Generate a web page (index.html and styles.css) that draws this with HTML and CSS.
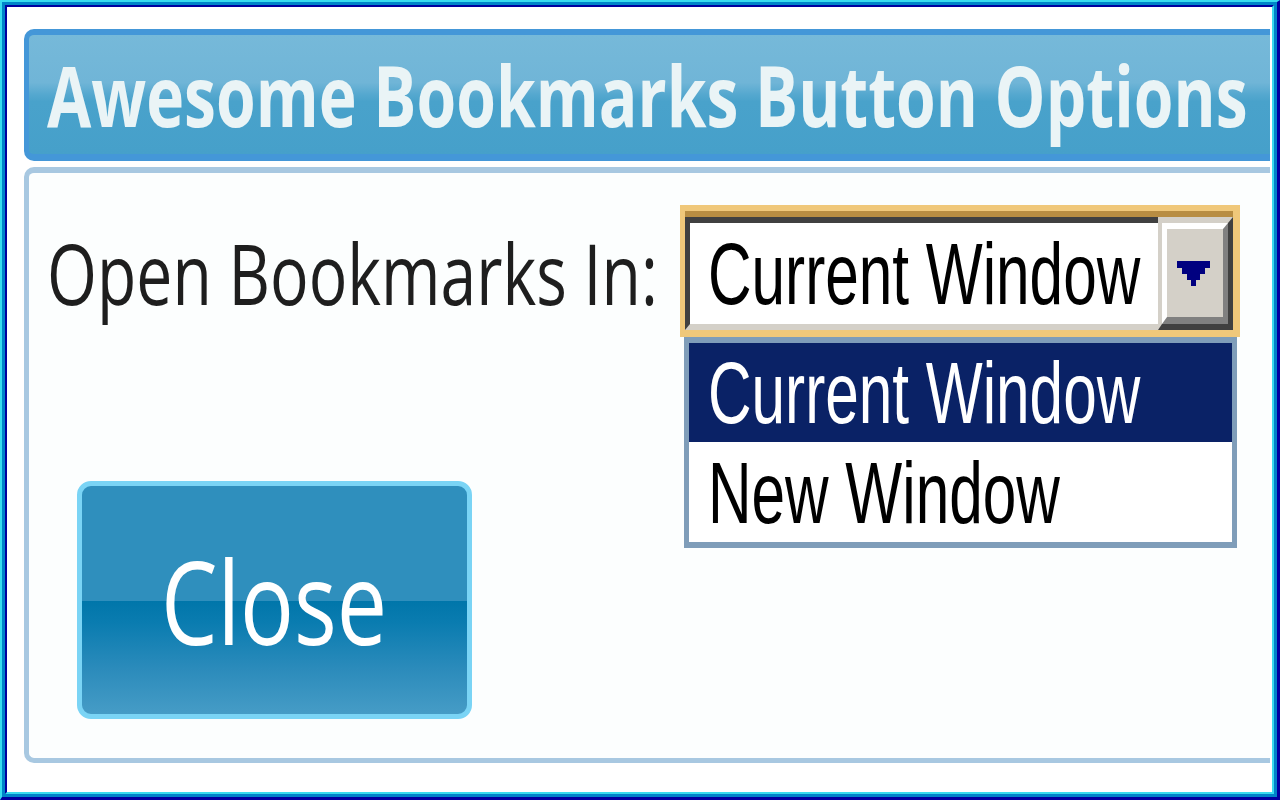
FILE: index.html
```html
<!DOCTYPE html>
<html lang="en">
<head>
<meta charset="utf-8">
<title>Awesome Bookmarks Button Options</title>
<link rel="stylesheet" href="styles.css">
</head>
<body>
<div class="frame">
  <div class="frame-mid">
    <div class="frame-in">
      <div class="titlebar"><span class="title-text">Awesome Bookmarks Button Options</span></div>
      <div class="panel">
        <div class="row">
          <div class="label"><span class="label-text">Open Bookmarks In:</span></div>
          <div class="select-wrap">
            <div class="select-ring">
              <div class="field">
                <div class="textbox"><span class="sel-text">Current Window</span></div>
                <div class="dropbtn">
                  <div class="dropbtn-face">
                    <svg class="arrow" width="33" height="25" viewBox="0 0 33 25" shape-rendering="crispEdges">
                      <polygon points="0,0 33,0 33,7 28,7 28,13 23,13 23,19 19,19 19,25 14,25 14,19 10,19 10,13 5,13 5,7 0,7" fill="#000080"/>
                    </svg>
                  </div>
                </div>
              </div>
            </div>
            <ul class="options">
              <li class="option selected"><span class="sel-text">Current Window</span></li>
              <li class="option"><span class="sel-text">New Window</span></li>
            </ul>
          </div>
        </div>
        <div class="actions">
          <button class="close-btn" type="button"><span class="close-text">Close</span></button>
        </div>
      </div>
    </div>
  </div>
</div>
</body>
</html>
```
FILE: styles.css
```css
html, body {
  margin: 0;
  padding: 0;
  background: #ffffff;
}

.frame {
  width: 1280px;
  height: 800px;
  box-sizing: border-box;
  border-style: solid;
  border-width: 2px 3px 3px 2px;
  border-color: #38dcef #0000a0 #0000a0 #38dcef;
  overflow: hidden;
  font-family: "Open Sans", "Noto Sans", sans-serif;
}

.frame-mid {
  height: 100%;
  box-sizing: border-box;
  border: 3px solid #0084c9;
}

.frame-in {
  height: 100%;
  box-sizing: border-box;
  border-style: solid;
  border-width: 2px;
  border-color: #0000a0 #38dcef #38dcef #0000a0;
  background: #ffffff;
  padding: 22px 2px 0 17px;
}

/* Title bar */
.titlebar {
  height: 132px;
  box-sizing: border-box;
  border-style: solid;
  border-color: #4497d8;
  border-width: 6px 0 7px 5px;
  border-radius: 10px 0 0 10px;
  background: linear-gradient(to bottom, #76b9d9 0%, #70b5d7 40%, #55a8cf 50%, #49a2cb 56%, #46a0ca 100%);
  display: flex;
  align-items: center;
  padding-left: 18px;
}

.title-text {
  display: inline-block;
  font-size: 85px;
  line-height: 1;
  font-weight: 700;
  color: #eaf4f6;
  white-space: nowrap;
  transform: scaleX(0.755);
  transform-origin: left center;
}

/* Panel */
.panel {
  margin-top: 6px;
  height: 596px;
  box-sizing: border-box;
  border-style: solid;
  border-color: #a8c8e1;
  border-width: 6px 0 5px 5px;
  border-radius: 10px 0 0 10px;
  background: #fcfefe;
  padding: 32px 0 0 18px;
}

.row {
  display: flex;
  align-items: center;
}

.label {
  width: 633px;
  flex-shrink: 0;
  padding-top: 4px;
}

.label-text {
  display: inline-block;
  font-size: 84px;
  line-height: 1;
  color: #1e1e1e;
  white-space: nowrap;
  transform: scaleX(0.765);
  transform-origin: left center;
}

/* Select */
.select-wrap {
  position: relative;
  width: 560px;
  flex-shrink: 0;
}

.select-ring {
  border-style: solid;
  border-color: #f0c87a;
  border-width: 6px 7px 7px 5px;
}

.field {
  border-top: 6px solid #b88d42;
  display: flex;
  height: 113px;
}

.textbox {
  flex: 1;
  min-width: 0;
  box-sizing: border-box;
  border-style: solid;
  border-width: 6px 0 6px 5px;
  border-color: #404040 #ffffff #d4d0c8 #404040;
  background: #ffffff;
  display: flex;
  align-items: center;
  padding-left: 18px;
}

.sel-text {
  display: inline-block;
  font-family: "Liberation Sans", Arial, sans-serif;
  font-size: 87px;
  line-height: 1;
  color: #000000;
  white-space: nowrap;
  transform: scaleX(0.693);
  transform-origin: left center;
}

.dropbtn {
  width: 75px;
  flex-shrink: 0;
  box-sizing: border-box;
  border-style: solid;
  border-width: 6px 5px 6px 4px;
  border-color: #d4d0c8 #404040 #404040 #d4d0c8;
}

.dropbtn-face {
  height: 100%;
  box-sizing: border-box;
  border-style: solid;
  border-width: 6px 5px 7px 5px;
  border-color: #ffffff #808080 #808080 #ffffff;
  background: #d4d0c8;
  display: flex;
  align-items: center;
  justify-content: center;
}

.arrow {
  display: block;
  margin-right: 3px;
}

/* Dropdown list (overlay) */
.options {
  position: absolute;
  top: 132px;
  left: 4px;
  width: 553px;
  box-sizing: border-box;
  margin: 0;
  padding: 0;
  list-style: none;
  border-style: solid;
  border-color: #7f9db9;
  border-width: 6px 5px 6px 5px;
  background: #ffffff;
}

.option {
  height: 100px;
  display: flex;
  align-items: center;
  padding-left: 19px;
}

.option.selected {
  height: 99px;
  background: #0a2266;
}

.option.selected .sel-text {
  color: #ffffff;
}

/* Close button */
.actions {
  margin-top: 144px;
  padding-left: 30px;
}

.close-btn {
  width: 395px;
  height: 238px;
  box-sizing: border-box;
  border: 5px solid #7ad4f5;
  border-radius: 14px;
  background: linear-gradient(to bottom, #2f8fbd 0%, #2f8fbd 50.4%, #0076aa 50.4%, #0a7cb0 60%, #2b8bbb 80%, #469cc6 100%);
  padding: 0;
  margin: 0;
  display: flex;
  align-items: center;
  justify-content: center;
  font-family: "Open Sans", "Noto Sans", sans-serif;
  cursor: pointer;
}

.close-text {
  display: inline-block;
  font-size: 115px;
  line-height: 1;
  color: #ffffff;
  white-space: nowrap;
  transform: scaleX(0.78);
  transform-origin: center center;
}
```
